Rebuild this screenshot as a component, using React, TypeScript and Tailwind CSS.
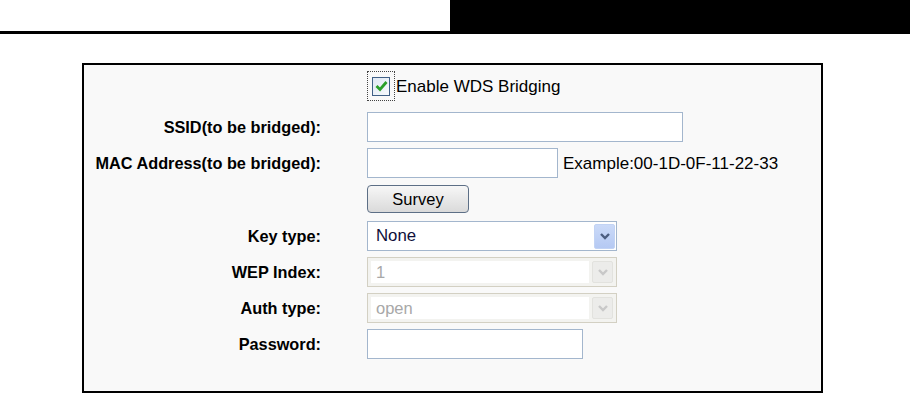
import React from "react";

function Chevron({ color }: { color: string }) {
  return (
    <svg width="12" height="8" viewBox="0 0 12 8">
      <path d="M2 2 L6 6 L10 2" fill="none" stroke={color} strokeWidth="2.4" />
    </svg>
  );
}

function Label({ children }: { children: React.ReactNode }) {
  return (
    <div className="w-[237px] shrink-0 text-right font-bold text-[16.3px] text-black leading-none">
      {children}
    </div>
  );
}

function Row({
  label,
  className,
  children,
}: {
  label?: string;
  className: string;
  children: React.ReactNode;
}) {
  return (
    <div className={"flex items-center " + className}>
      <Label>{label ?? ""}</Label>
      <div className="ml-[46px] flex items-center h-full">{children}</div>
    </div>
  );
}

function Select({ value, disabled }: { value: string; disabled?: boolean }) {
  if (disabled) {
    return (
      <div className="w-[250px] h-[30px] border border-[#d3d0c3] bg-[#f3f3f0] flex items-center p-[3px] gap-[3px]">
        <div className="flex-1 h-full bg-white flex items-center pl-[5px] text-[16.5px] text-[#a8a8a8] leading-none">
          {value}
        </div>
        <div className="w-[21px] h-full rounded-[2px] bg-[#ececea] border border-[#e2e2de] flex items-center justify-center">
          <Chevron color="#c8c8c8" />
        </div>
      </div>
    );
  }
  return (
    <div className="w-[250px] h-[30px] border border-[#a3b6cd] bg-white flex items-center pr-[1px]">
      <div className="flex-1 pl-[8px] text-[16.8px] text-[#10103a] leading-none">{value}</div>
      <div className="w-[21px] h-[25px] rounded-[2px] bg-gradient-to-b from-[#cbdaf8] to-[#b5c9f3] border border-[#c2d3f4] flex items-center justify-center">
        <Chevron color="#4c5e80" />
      </div>
    </div>
  );
}

export default function App() {
  return (
    <div className="w-[910px] h-[393px] bg-white overflow-hidden font-['Liberation_Sans',Arial,sans-serif] text-black">
      {/* header */}
      <div className="flex h-[34px]">
        <div className="flex-1 border-b-[3px] border-black" />
        <div className="w-[460px] bg-black" />
      </div>

      {/* panel */}
      <div className="ml-[82px] mt-[29px] w-[741px] h-[330px] border-2 border-black bg-[#f9f9f9]">
        <Row className="mt-[6px] h-[30px]">
          <div className="flex items-center">
            <div className="w-[28px] h-[30px] border border-dotted border-[#444] flex items-center justify-center">
              <div className="w-[18px] h-[19px] border border-[#3f5f86] bg-gradient-to-br from-[#dfe8f3] to-[#f7fafd] flex items-center justify-center">
                <svg width="13" height="12" viewBox="0 0 13 12">
                  <path d="M1.5 6 L5 9.5 L11.5 2" fill="none" stroke="#2aa02a" strokeWidth="2.8" />
                </svg>
              </div>
            </div>
            <span className="ml-[1px] text-[17px] leading-none">Enable WDS Bridging</span>
          </div>
        </Row>

        <Row label="SSID(to be bridged):" className="mt-[11px] h-[30px]">
          <div className="w-[316px] h-[30px] border border-[#a3b6cd] bg-white" />
        </Row>

        <Row label="MAC Address(to be bridged):" className="mt-[6px] h-[30px]">
          <div className="w-[191px] h-[30px] border border-[#a3b6cd] bg-white" />
          <span className="ml-[5px] text-[17px] leading-none">Example:00-1D-0F-11-22-33</span>
        </Row>

        <Row className="mt-[7px] h-[28px]">
          <button className="w-[102px] h-[28px] rounded-[4px] border border-[#5d6f86] bg-gradient-to-b from-[#f7f7f7] to-[#dadada] text-[16.5px] leading-none text-black flex items-center justify-center">
            Survey
          </button>
        </Row>

        <Row label="Key type:" className="mt-[8px] h-[30px]">
          <Select value="None" />
        </Row>

        <Row label="WEP Index:" className="mt-[6px] h-[30px]">
          <Select value="1" disabled />
        </Row>

        <Row label="Auth type:" className="mt-[6px] h-[30px]">
          <Select value="open" disabled />
        </Row>

        <Row label="Password:" className="mt-[6px] h-[30px]">
          <div className="w-[216px] h-[30px] border border-[#a3b6cd] bg-white" />
        </Row>
      </div>
    </div>
  );
}
